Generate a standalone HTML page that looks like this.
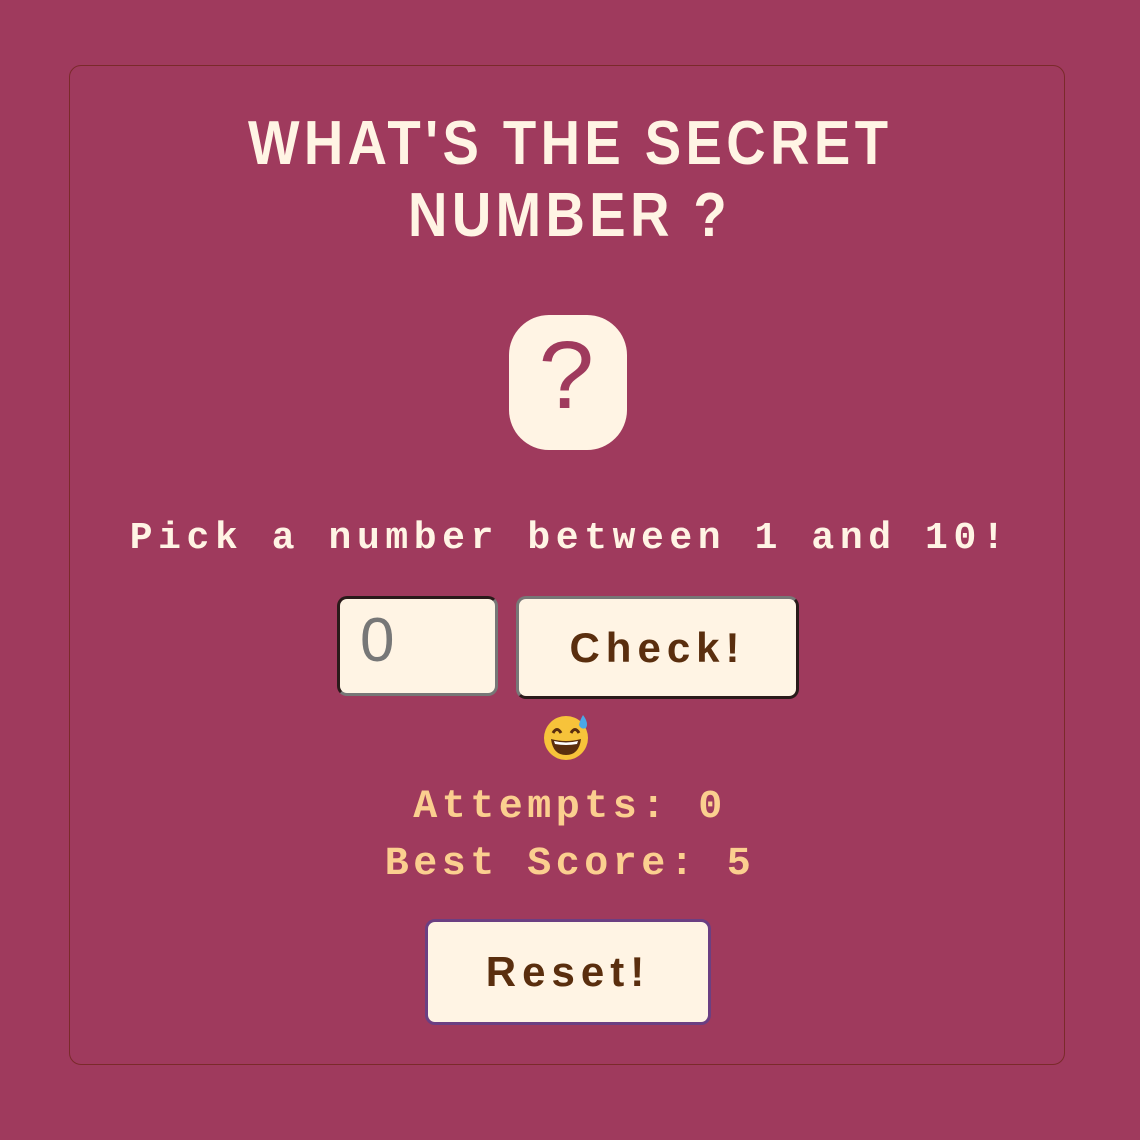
<!DOCTYPE html>
<html><head><meta charset="utf-8"><style>
html,body{margin:0;padding:0;background:#9f3a5d;width:1140px;height:1140px;overflow:hidden}
.card{position:absolute;left:69px;top:65px;width:996px;height:1000px;border:1px solid #7a2a2a;border-radius:12px;box-sizing:border-box}
.t{position:absolute;left:0;width:1140px;text-align:center;color:#fff4e4;font-family:"Liberation Sans",sans-serif;font-weight:bold;font-size:62px;line-height:60px;letter-spacing:5px}
.t span{display:inline-block;transform:scaleX(0.88)}
.q{position:absolute;left:509px;top:315px;width:118px;height:135px;background:#fff4e4;border-radius:40px;color:#9f3a5d;font-family:"Liberation Mono",monospace;font-size:100px;line-height:135px;text-align:center}
.mono{font-family:"Liberation Mono","DejaVu Sans Mono",monospace;font-weight:bold;position:absolute;left:0;width:1140px;text-align:center}
.box{position:absolute;background:#fff4e4;box-sizing:border-box;border-radius:10px}
</style></head><body>
<div class="card"></div>
<div class="t" style="top:114px"><span>WHAT'S THE SECRET</span></div>
<div class="t" style="top:186px"><span>NUMBER ?</span></div>
<div class="q">?</div>
<div class="mono" style="top:516px;font-size:38px;line-height:46px;letter-spacing:5.6px;color:#fff4e4">Pick a number between 1 and 10!</div>
<div class="box" style="left:337px;top:596px;width:161px;height:100px;border:3px solid #2a1a1a;border-right-color:#777;border-bottom-color:#777;color:#777;font-family:'Liberation Sans',sans-serif;font-size:62px;padding-left:20px;line-height:84px">0</div>
<div class="box" style="left:516px;top:596px;width:283px;height:103px;border:3px solid #777;border-right-color:#2a1a1a;border-bottom-color:#2a1a1a;color:#5a2e0e;font-family:'Liberation Sans',sans-serif;font-weight:bold;font-size:42px;letter-spacing:6px;text-align:center;line-height:98px">Check!</div>
<svg style="position:absolute;left:543px;top:713px" width="48" height="48" viewBox="0 0 48 48">
<circle cx="23" cy="25" r="22" fill="#f7c33a"/><path d="M8 26 Q23 30 38 26 Q36 42 23 42 Q10 42 8 26Z" fill="#5a2e0e"/><path d="M11 28 Q23 31 35 28 L34 31 Q23 33 12 31Z" fill="#fff"/>
<path d="M10 20 Q14 13 18 20" stroke="#5a2e0e" stroke-width="3" fill="none"/><path d="M28 20 Q32 13 36 20" stroke="#5a2e0e" stroke-width="3" fill="none"/>
<path d="M40 2 Q46 10 43 15 Q38 17 36 12 Q37 7 40 2Z" fill="#4aa8e8"/></svg>
<div class="mono" style="top:783px;font-size:40px;line-height:50px;letter-spacing:4.5px;color:#fbcf8f">Attempts: 0</div>
<div class="mono" style="top:840px;font-size:40px;line-height:50px;letter-spacing:4.5px;color:#fbcf8f">Best Score: 5</div>
<div class="box" style="left:425px;top:919px;width:286px;height:106px;border:3px solid #6b3f82;box-shadow:inset 0 0 0 2px #fff4e4;color:#5a2e0e;font-family:'Liberation Sans',sans-serif;font-weight:bold;font-size:42px;letter-spacing:6px;text-align:center;line-height:100px">Reset!</div>
</body></html>
